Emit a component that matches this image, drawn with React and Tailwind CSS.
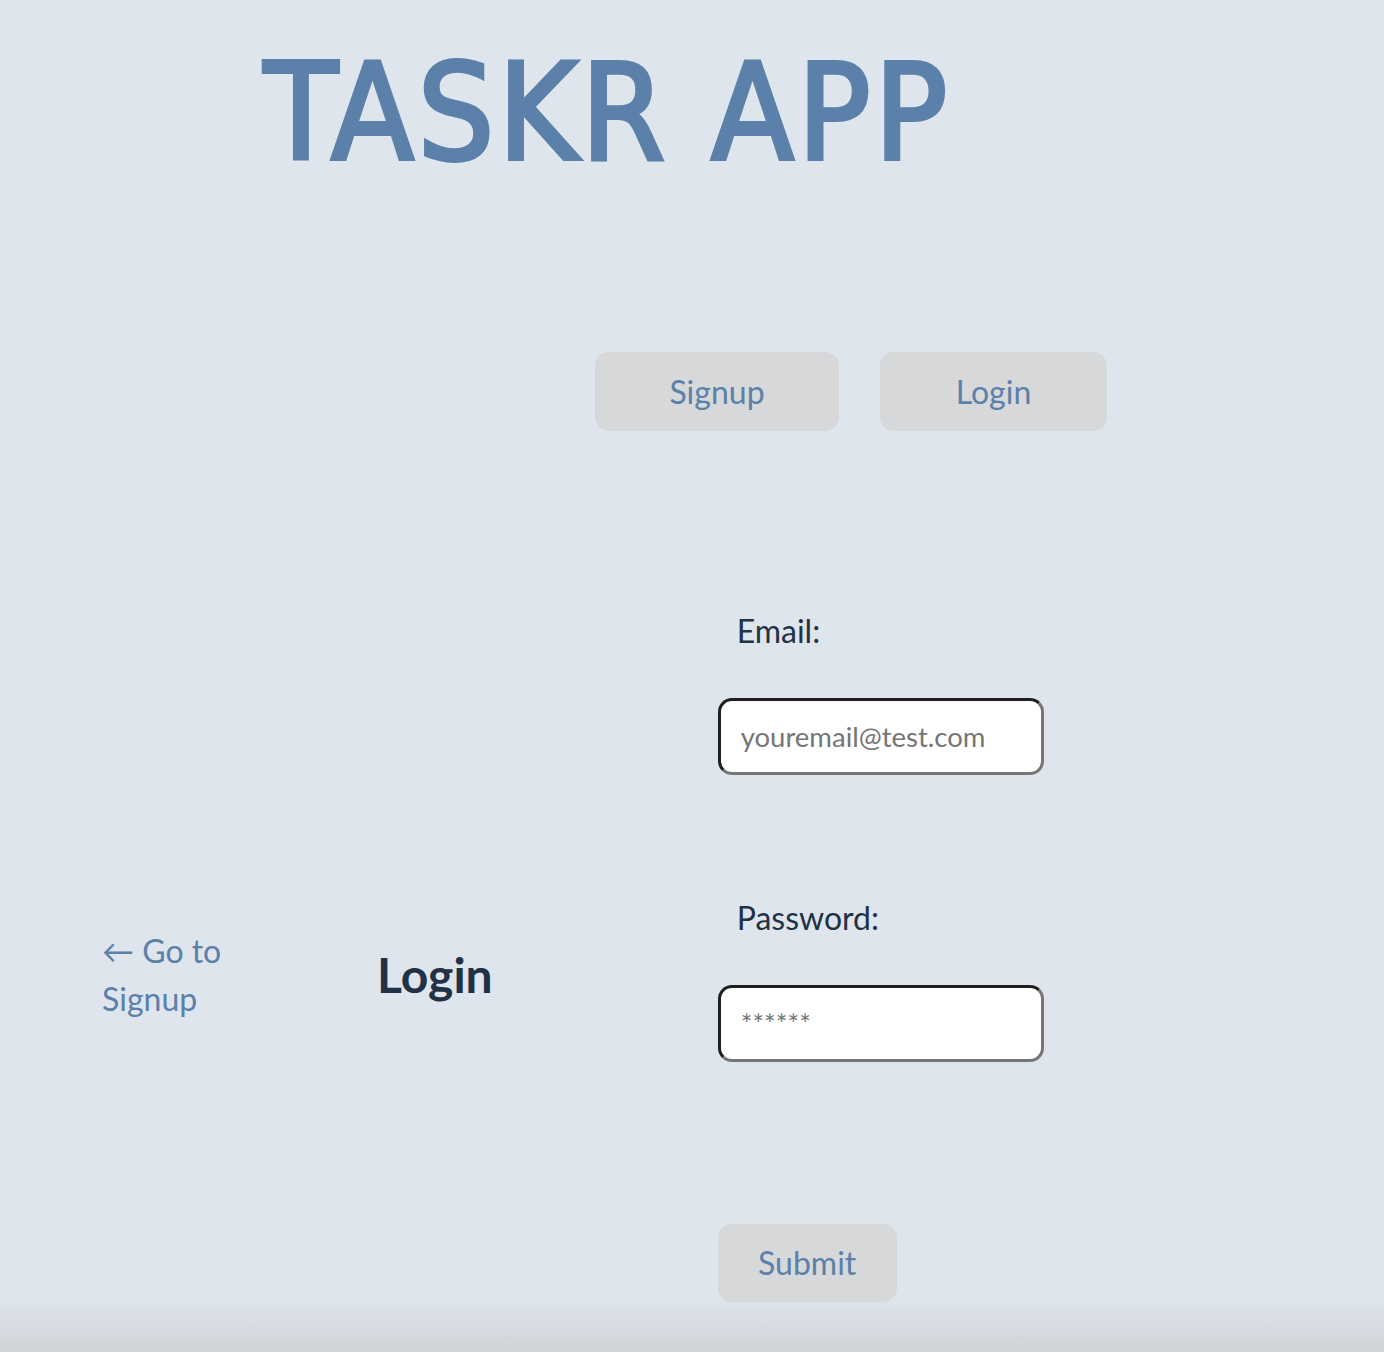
import React from 'react'

const Field = ({ label, type, placeholder }) => (
  <div className="flex flex-col">
    <label className="pl-[19px] text-[32px] leading-[48px] text-[#213246]">{label}</label>
    <input
      type={type}
      placeholder={placeholder}
      className="mt-[43px] h-[77px] w-[326px] rounded-[14px] border-[3px] border-t-[#1f1f1f] border-l-[#1f1f1f] border-b-[#767676] border-r-[#767676] bg-white px-[20px] text-[27.5px] text-[#333] placeholder:text-[#767676] outline-none"
    />
  </div>
)

const App = () => {
  return (
    <div className="min-h-[1352px] bg-[linear-gradient(to_bottom,#dfe5ec_96%,#cfd4d8)] font-['Lato',sans-serif]">
      <h1 className="pl-[264px] pt-[46px] text-[134px] leading-none font-normal tracking-[4px] text-[#5b80a9] [-webkit-text-stroke:4px_#5b80a9] font-['DejaVu_Sans_Condensed',sans-serif]">
        TASKR APP
      </h1>

      <nav className="mt-[172px] flex gap-[41px] pl-[595px]">
        <button className="h-[79px] w-[244px] rounded-[14px] bg-[#d7d8da] text-[32px] text-[#5b80a9]">
          Signup
        </button>
        <button className="h-[79px] w-[227px] rounded-[14px] bg-[#d7d8da] text-[32px] text-[#5b80a9]">
          Login
        </button>
      </nav>

      <main className="mt-[176px] flex items-center">
        <a href="#" className="ml-[102px] w-[150px] text-[32px] leading-[48px] text-[#5b80a9]">
          ← Go to Signup
        </a>
        <h2 className="ml-[125px] text-[48px] leading-[72px] font-bold text-[#213246]">Login</h2>
        <form className="ml-[225px] flex flex-col pb-[40px]" onSubmit={(e) => e.preventDefault()}>
          <Field label="Email:" type="email" placeholder="youremail@test.com" />
          <div className="mt-[119px]">
            <Field label="Password:" type="password" placeholder="******" />
          </div>
          <button className="mt-[162px] h-[78px] w-[179px] rounded-[14px] bg-[#d7d8da] text-[32px] text-[#5b80a9]">
            Submit
          </button>
        </form>
      </main>
    </div>
  )
}

export default App
